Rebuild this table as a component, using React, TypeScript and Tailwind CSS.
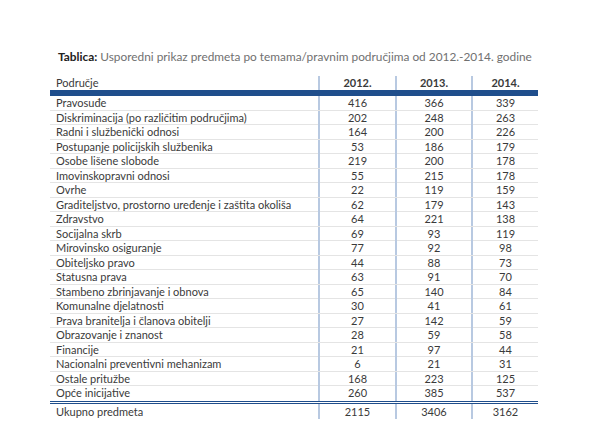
import React from "react";

const rows: [string, number, number, number][] = [
    ["Pravosuđe", 416, 366, 339],
    ["Diskriminacija (po različitim područjima)", 202, 248, 263],
    ["Radni i službenički odnosi", 164, 200, 226],
    ["Postupanje policijskih službenika", 53, 186, 179],
    ["Osobe lišene slobode", 219, 200, 178],
    ["Imovinskopravni odnosi", 55, 215, 178],
    ["Ovrhe", 22, 119, 159],
    ["Graditeljstvo, prostorno uređenje i zaštita okoliša", 62, 179, 143],
    ["Zdravstvo", 64, 221, 138],
    ["Socijalna skrb", 69, 93, 119],
    ["Mirovinsko osiguranje", 77, 92, 98],
    ["Obiteljsko pravo", 44, 88, 73],
    ["Statusna prava", 63, 91, 70],
    ["Stambeno zbrinjavanje i obnova", 65, 140, 84],
    ["Komunalne djelatnosti", 30, 41, 61],
    ["Prava branitelja i članova obitelji", 27, 142, 59],
    ["Obrazovanje i znanost", 28, 59, 58],
    ["Financije", 21, 97, 44],
    ["Nacionalni preventivni mehanizam", 6, 21, 31],
    ["Ostale pritužbe", 168, 223, 125],
    ["Opće inicijative", 260, 385, 537],
];

const grid = "grid grid-cols-[268px_77px_76px_67px]";
const num = "border-l-2 border-[#b8c9e1] text-center";

export default function App() {
    return (
        <div className="w-[600px] h-[438px] bg-white text-[#3a3a3a] font-['Lato',sans-serif] pt-[48px] pl-[50px]">
            {/* Caption */}
            <p className="pl-[8px] text-[11.85px] leading-[18px] text-[#707070] whitespace-nowrap">
                <span className="font-bold text-[#222]">Tablica:</span> Usporedni prikaz predmeta po temama/pravnim područjima od 2012.-2014. godine
            </p>

            <div className="mt-[10px] w-[488px] text-[11px]">
                {/* Header */}
                <div className={`${grid} h-[20px] leading-[14px] border-b-[6px] border-[#1f4e8c]`}>
                    <div className="pl-[6px]">Područje</div>
                    <div className={`${num} font-bold`}>2012.</div>
                    <div className={`${num} font-bold`}>2013.</div>
                    <div className={`${num} font-bold`}>2014.</div>
                </div>

                {rows.map(([name, a, b, c], i) => (
                    <div
                        key={name}
                        className={`${grid} h-[14.5px] leading-[14px] ${
                            i === rows.length - 1 ? "" : "border-b border-[#e4e4e4]"
                        }`}
                    >
                        <div className="pl-[6px] whitespace-nowrap">{name}</div>
                        <div className={num}>{a}</div>
                        <div className={num}>{b}</div>
                        <div className={num}>{c}</div>
                    </div>
                ))}

                {/* Totals */}
                <div className="border-t-[3px] border-double border-[#1f4e8c]" />
                <div className={`${grid} h-[15px] leading-[15px]`}>
                    <div className="pl-[6px]">Ukupno predmeta</div>
                    <div className={num}>2115</div>
                    <div className={num}>3406</div>
                    <div className={num}>3162</div>
                </div>
            </div>
        </div>
    );
}
